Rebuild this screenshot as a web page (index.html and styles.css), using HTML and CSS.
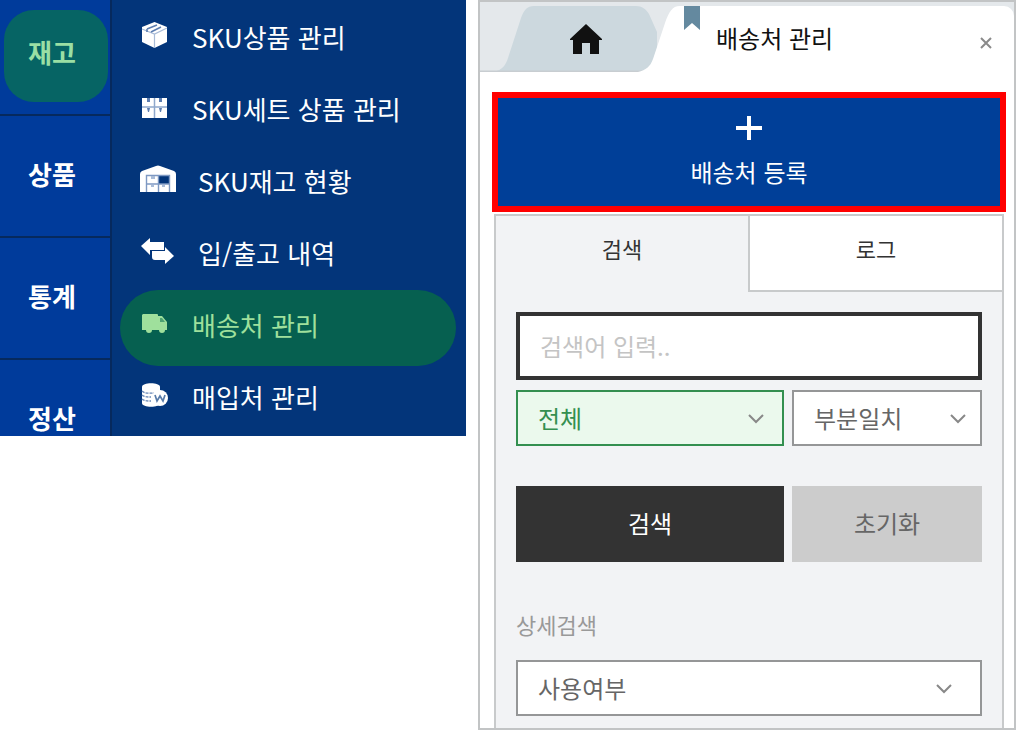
FILE: index.html
```html
<!DOCTYPE html>
<html lang="ko">
<head>
<meta charset="utf-8">
<meta name="viewport" content="width=device-width, initial-scale=1">
<title>배송처 관리</title>
<link rel="stylesheet" href="styles.css">
</head>
<body>
<div class="workspace">
  <div class="menu">
    <nav class="rail" aria-label="주 메뉴">
      <a class="rail-item" href="#"><span class="rail-label rail-label-active">재고</span></a>
      <a class="rail-item" href="#"><span class="rail-label">상품</span></a>
      <a class="rail-item" href="#"><span class="rail-label">통계</span></a>
      <a class="rail-item" href="#"><span class="rail-label">정산</span></a>
    </nav>
    <nav class="submenu" aria-label="재고 메뉴">
      <a class="sub-item" href="#">
        <svg class="icon" width="28" height="28" viewBox="0 0 28 28"><path fill="#fff" d="M14.500 1 27 6v15l-12.500 6L2 21V6z"/><path fill="none" stroke="#a9bcd8" stroke-width="1.200" d="m2 8 12.500 5L27 7M14.500 13v14"/><path fill="none" stroke="#5c7db0" stroke-width="1.600" d="m7 8 10-4M11 11l10-5M7 8v3"/></svg>
        SKU상품 관리
      </a>
      <a class="sub-item" href="#">
        <svg class="icon" width="28" height="28" viewBox="0 0 28 28"><path fill="#fff" d="M2 5h25v20H2z"/><path fill="#5c7db0" d="M7 5h3v4H7zM19 5h3v4h-3zM7 15h3l-1 4H8zM19 15h3l-1 4h-1z"/><path fill="none" stroke="#8fa8cc" stroke-width="1.500" d="M2 14h25M14.500 5v20"/></svg>
        SKU세트 상품 관리
      </a>
      <a class="sub-item" href="#">
        <svg class="icon icon-wide" width="36" height="28" viewBox="0 0 36 28"><path fill="#fff" d="M0 27V9q0-2 2-3L16 1q2-1 4 0l14 5q2 1 2 3v18z"/><path fill="#03357a" d="M19 11h10v8H19z"/><path fill="none" stroke="#7d98c2" stroke-width="1.400" d="M6.500 27V10.500h23V27M7 19h22M18.500 11v16"/><path fill="#a9bcd8" d="M11 11h4v3h-4zM11 20h3v2h-3zM22 20h3v2h-3z"/></svg>
        SKU재고 현황
      </a>
      <a class="sub-item" href="#">
        <svg class="icon icon-wide" width="36" height="28" viewBox="0 0 36 28"><path fill="#fff" d="m1 9 9-8v4h14v8H10v5z"/><path fill="#fff" d="M12 14h13v-4l9 9-9 8v-4H15q-3 0-3-3z"/></svg>
        입/출고 내역
      </a>
      <a class="sub-item sub-item-active" href="#">
        <svg class="icon" width="28" height="28" viewBox="0 0 28 28"><path fill="#9fe09c" d="M3 5h14q1 0 1 1v1h4l5 6v8h-2a3 3 0 0 1-6 0h-7a3 3 0 0 1-6 0H2V6z"/><path fill="#4da272" d="M20 9h2l3 4h-5z"/></svg>
        배송처 관리
      </a>
      <a class="sub-item" href="#">
        <svg class="icon" width="28" height="28" viewBox="0 0 28 28"><path fill="#fff" d="M2 6c0-5 18-5 18 0v16c0 5-18 5-18 0z"/><path fill="none" stroke="#6787b6" stroke-width="1.300" stroke-dasharray="3 1" d="M2 10c3 3 8 2 12 2M2 14c2 2 5 2 9 2M2 18c2 2 5 2 9 2"/><circle cx="20" cy="17" r="8" fill="#fff"/><path fill="none" stroke="#587ba9" stroke-width="1.700" d="m15 14 2 6 3-5 3 5 2-6"/></svg>
        매입처 관리
      </a>
    </nav>
  </div>

  <main class="panel">
    <header class="tabs">
      <a class="home" href="#" aria-label="홈">
        <svg class="home-shape" width="200" height="70" viewBox="0 0 200 70"><path fill="#ccd8de" d="M14 70c8-2 12-7 14-14L41 16C44 8 47 4 54 4H156c6 0 10 3 13 8l8 18v40z"/><path fill="#c8cdd1" d="M0 68.500h165V70H0z"/><path fill="#fff" d="M158 70c8-2 12-5 15-13l12-36C189 10 192 4 200 4v66z"/><path fill="#111" d="m106 22 16 15v1h-3v14h-9V41h-8v11h-9V38h-3v-1z"/></svg>
      </a>
      <div class="current">
        <svg class="bookmark" width="16" height="24" viewBox="0 0 16 24"><path fill="#64899f" d="M0 0h16v24l-8-7-8 7z"/></svg>
        <h1 class="current-title">배송처 관리</h1>
        <button class="close" type="button" aria-label="닫기">
          <svg width="12" height="12" viewBox="0 0 12 12"><path fill="none" stroke="#8a8a8a" stroke-width="2" d="m1 1 10 10M11 1 1 11"/></svg>
        </button>
      </div>
    </header>

    <div class="content">
      <button class="register" type="button">
        <svg width="26" height="24" viewBox="0 0 26 24"><path fill="#fff" d="M11 0h4v10h11v4H15v10h-4V14H0v-4h11z"/></svg>
        배송처 등록
      </button>

      <section class="search">
        <div class="modes" role="tablist">
          <button class="mode" type="button" role="tab" aria-selected="true">검색</button>
          <button class="mode mode-off" type="button" role="tab" aria-selected="false">로그</button>
        </div>
        <form class="form">
          <input class="keyword" type="text" placeholder="검색어 입력.." aria-label="검색어">
          <div class="pair">
            <div class="select select-on">
              <select aria-label="검색 항목"><option>전체</option></select>
              <svg class="chevron" width="16" height="10" viewBox="0 0 16 10"><path fill="none" stroke="#888" stroke-width="2" d="m1 1 7 7 7-7"/></svg>
            </div>
            <div class="select select-tight">
              <select aria-label="일치 방식"><option>부분일치</option></select>
              <svg class="chevron" width="16" height="10" viewBox="0 0 16 10"><path fill="none" stroke="#888" stroke-width="2" d="m1 1 7 7 7-7"/></svg>
            </div>
          </div>
          <div class="pair actions">
            <button class="action action-go" type="submit">검색</button>
            <button class="action" type="reset">초기화</button>
          </div>
          <label class="detail" for="usage">상세검색</label>
          <div class="select select-usage">
            <select id="usage"><option>사용여부</option></select>
            <svg class="chevron" width="16" height="10" viewBox="0 0 16 10"><path fill="none" stroke="#888" stroke-width="2" d="m1 1 7 7 7-7"/></svg>
          </div>
        </form>
      </section>
    </div>
  </main>
</div>
</body>
</html>
```
FILE: styles.css
```css
* {
  box-sizing: border-box;
}

body,
button,
input,
select {
  font-family: "Noto Sans CJK KR", "Noto Sans", sans-serif;
  font-size: 24px;
  line-height: 32px;
}

body {
  margin: 0;
  background: #fff;
}

a {
  color: inherit;
  text-decoration: none;
}

button {
  margin: 0;
  padding: 0;
  border: 0;
  background: none;
  color: inherit;
}

svg {
  display: block;
  flex: none;
}

.workspace {
  display: grid;
  grid-template-columns: 466fr 538fr;
  gap: 12px;
  align-items: start;
}

/* Left menu */
.menu {
  display: flex;
  color: #fff;
  font-size: 26px;
  background: #03357a;
}

.rail {
  width: 112px;
  flex: none;
  background: #003b9b;
  border-right: 2px solid #06295d;
  font-weight: 700;
}

.rail-item {
  display: block;
  padding: 14px 2px 16px 4px;
  border-bottom: 2px solid #06295d;
}

.rail-item:first-child {
  padding-top: 10px;
  padding-bottom: 12px;
}

.rail-item:last-child {
  padding-bottom: 0;
  border-bottom: 0;
}

.rail-label {
  display: block;
  padding: 28px 8px 30px 0;
  border-radius: 30px;
  text-align: center;
}

.rail-item:last-child .rail-label {
  padding-bottom: 2px;
}

.rail-label-active {
  background: #066464;
  color: #9adfa4;
  padding-top: 26px;
  padding-bottom: 34px;
}

.submenu {
  flex: 1;
  padding: 2px 10px 0 8px;
}

.sub-item {
  display: flex;
  align-items: center;
  gap: 24px;
  padding: 19px 0 21px 20px;
  white-space: nowrap;
}

.sub-item-active {
  padding-bottom: 25px;
  margin-bottom: -4px;
  border-radius: 38px;
  background: #066050;
  color: #9fe09c;
}

.icon {
  margin-bottom: 4px;
}

.icon-wide {
  margin-right: -2px;
}

/* Right panel */
.panel {
  border: 2px solid #c2c4c5;
}

.tabs {
  display: flex;
  background: #e4e8eb;
}

.current {
  flex: 1;
  display: flex;
  align-items: flex-start;
  margin-top: 4px;
  padding-left: 4px;
  background: #fff;
  border-radius: 0 10px 0 0;
}

.current-title {
  flex: 1;
  margin: 0;
  padding: 16px 0 0 16px;
  color: #111;
  font-size: 24px;
  font-weight: 400;
}

.close {
  padding: 31px 22px 0 0;
}

.content {
  padding: 20px 8px 0 12px;
}

.register {
  display: flex;
  flex-direction: column;
  align-items: center;
  gap: 16px;
  width: 100%;
  padding: 18px 0;
  border: 6px solid #f00;
  background: #003f98;
  color: #fff;
}

.search {
  margin: 2px 2px 0;
  border: 2px solid #c8cacb;
  border-bottom: 0;
  background: #f2f3f5;
}

.modes {
  display: grid;
  grid-template-columns: 252fr 254fr;
  color: #333;
}

.mode {
  padding: 16px 0 28px;
  font-size: 22px;
}

.mode-off {
  padding-bottom: 26px;
  border: solid #c8cacb;
  border-width: 0 0 2px 2px;
  background: #fff;
}

.form {
  padding: 20px 20px 12px;
}

.keyword {
  display: block;
  width: 100%;
  padding: 14px 20px;
  border: 4px solid #333;
  border-radius: 0;
  background: #fff;
}

.keyword::placeholder {
  color: #c4c4c4;
  opacity: 1;
}

.pair {
  display: grid;
  grid-template-columns: 268fr 190fr;
  gap: 8px;
  margin-top: 10px;
}

.select {
  position: relative;
}

.select select {
  display: block;
  width: 100%;
  height: 56px;
  padding: 0 20px;
  border: 2px solid #959697;
  border-radius: 0;
  background: #fff;
  color: #666;
  appearance: none;
}

.select-on select {
  border-color: #348f50;
  background: #ebf9ed;
  color: #348f50;
}

.chevron {
  position: absolute;
  top: 24px;
  right: 20px;
  pointer-events: none;
}

.select-tight .chevron {
  right: 16px;
}

.select-usage .chevron {
  right: 30px;
}

.actions {
  margin-top: 40px;
}

.action {
  padding: 21px 0 23px;
  background: #ccc;
  color: #666;
}

.action-go {
  background: #333;
  color: #fff;
}

.detail {
  display: block;
  margin: 46px 0 20px;
  color: #999;
  font-size: 22px;
}
```
